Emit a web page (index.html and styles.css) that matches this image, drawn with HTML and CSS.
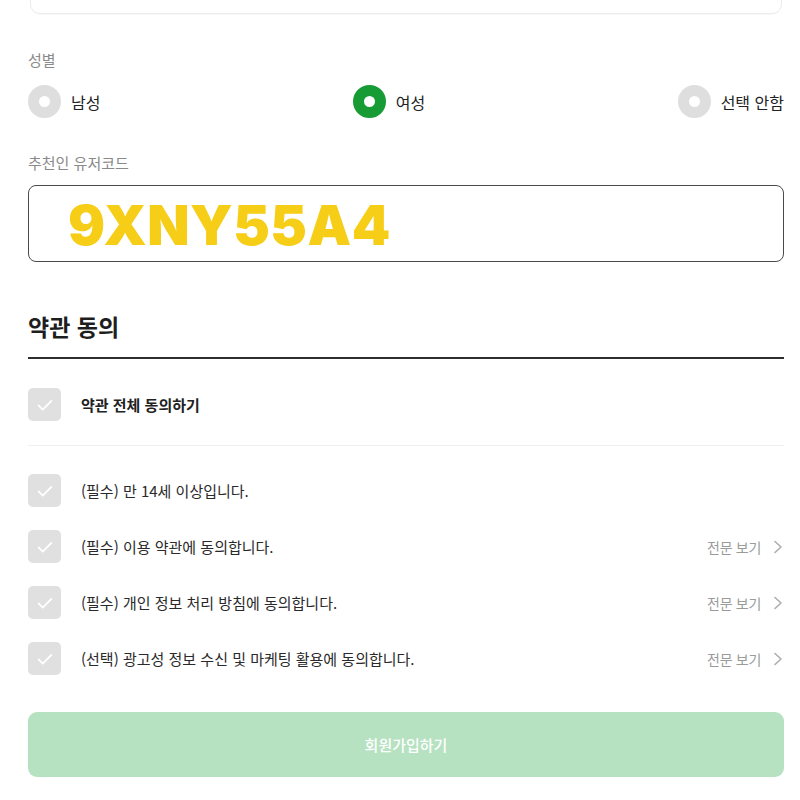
FILE: index.html
```html
<!DOCTYPE html>
<html lang="ko">
<head>
<meta charset="utf-8">
<link rel="stylesheet" href="styles.css">
</head>
<body>
<div class="page">
  <div class="prev-box"></div>

  <div class="label first">성별</div>
  <div class="radios">
    <label class="radio"><span class="dot"></span><span>남성</span></label>
    <label class="radio"><span class="dot on"></span><span>여성</span></label>
    <label class="radio"><span class="dot"></span><span>선택 안함</span></label>
  </div>

  <div class="label second">추천인 유저코드</div>
  <div class="code-input">9XNY55A4</div>

  <h2 class="terms-title">약관 동의</h2>

  <div class="all-row">
    <span class="check"><svg viewBox="0 0 24 24" width="22" height="22"><path d="M5 12.5l4.5 4.5L19 7.5" fill="none" stroke="#fff" stroke-width="2" stroke-linecap="round" stroke-linejoin="round"/></svg></span>
    <span class="all-text">약관 전체 동의하기</span>
  </div>

  <div class="terms">
    <div class="term">
      <span class="check"><svg viewBox="0 0 24 24" width="22" height="22"><path d="M5 12.5l4.5 4.5L19 7.5" fill="none" stroke="#fff" stroke-width="2" stroke-linecap="round" stroke-linejoin="round"/></svg></span>
      <span class="term-text">(필수) 만 14세 이상입니다.</span>
    </div>
    <div class="term">
      <span class="check"><svg viewBox="0 0 24 24" width="22" height="22"><path d="M5 12.5l4.5 4.5L19 7.5" fill="none" stroke="#fff" stroke-width="2" stroke-linecap="round" stroke-linejoin="round"/></svg></span>
      <span class="term-text">(필수) 이용 약관에 동의합니다.</span>
      <span class="view">전문 보기<svg viewBox="0 0 10 14" width="10" height="14"><path d="M2 1.5L8 7l-6 5.5" fill="none" stroke="#aaa" stroke-width="1.5" stroke-linecap="round" stroke-linejoin="round"/></svg></span>
    </div>
    <div class="term">
      <span class="check"><svg viewBox="0 0 24 24" width="22" height="22"><path d="M5 12.5l4.5 4.5L19 7.5" fill="none" stroke="#fff" stroke-width="2" stroke-linecap="round" stroke-linejoin="round"/></svg></span>
      <span class="term-text">(필수) 개인 정보 처리 방침에 동의합니다.</span>
      <span class="view">전문 보기<svg viewBox="0 0 10 14" width="10" height="14"><path d="M2 1.5L8 7l-6 5.5" fill="none" stroke="#aaa" stroke-width="1.5" stroke-linecap="round" stroke-linejoin="round"/></svg></span>
    </div>
    <div class="term">
      <span class="check"><svg viewBox="0 0 24 24" width="22" height="22"><path d="M5 12.5l4.5 4.5L19 7.5" fill="none" stroke="#fff" stroke-width="2" stroke-linecap="round" stroke-linejoin="round"/></svg></span>
      <span class="term-text">(선택) 광고성 정보 수신 및 마케팅 활용에 동의합니다.</span>
      <span class="view">전문 보기<svg viewBox="0 0 10 14" width="10" height="14"><path d="M2 1.5L8 7l-6 5.5" fill="none" stroke="#aaa" stroke-width="1.5" stroke-linecap="round" stroke-linejoin="round"/></svg></span>
    </div>
  </div>

  <button class="submit">회원가입하기</button>
</div>
</body>
</html>
```

FILE: styles.css
```css
* { box-sizing: border-box; }
html, body { margin: 0; padding: 0; background: #fff; }
body {
  font-family: "Noto Sans CJK KR", "Noto Sans", sans-serif;
  color: #222;
  overflow: hidden;
}
.page {
  width: 756px;
  margin-left: 28px;
  display: flex;
  flex-direction: column;
}
.prev-box {
  height: 60px;
  margin-top: -46px;
  margin-left: 2px;
  margin-right: 2px;
  border: 1px solid #ececec;
  border-radius: 10px;
  box-shadow: 0 1px 1px rgba(0,0,0,0.03);
}
.label {
  font-size: 15px;
  line-height: 20px;
  height: 20px;
  color: #8a8a8a;
}
.label.first { margin-top: 36px; }
.label.second { margin-top: 35px; }
.radios {
  margin-top: 15px;
  display: flex;
  justify-content: space-between;
  align-items: center;
  height: 33px;
}
.radio {
  display: flex;
  align-items: center;
  gap: 10px;
  font-size: 16px;
  color: #222;
}
.dot {
  width: 33px;
  height: 33px;
  border-radius: 50%;
  border: 11px solid #dedede;
  background: #fff;
}
.dot.on { border-color: #179b35; }
.code-input {
  margin-top: 12px;
  height: 77px;
  border: 1px solid #4a4a4a;
  border-radius: 8px;
  padding-left: 39px;
  padding-top: 4px;
  font-family: "Inter", "Liberation Sans", sans-serif;
  font-weight: 900;
  font-size: 55px;
  line-height: 71px;
  color: #f6cd17;
  letter-spacing: 0.5px;
}
.terms-title {
  margin: 49px 0 0;
  font-size: 23px;
  font-weight: 700;
  line-height: 30px;
  color: #1e1e1e;
  padding-bottom: 16px;
  border-bottom: 2px solid #2e2e2e;
}
.check {
  width: 33px;
  height: 33px;
  border-radius: 5px;
  background: #e0e0e0;
  display: flex;
  align-items: center;
  justify-content: center;
  flex-shrink: 0;
}
.all-row {
  margin-top: 29px;
  display: flex;
  align-items: center;
  gap: 20px;
  padding-bottom: 24px;
  border-bottom: 1px solid #efefef;
}
.all-text {
  font-size: 15px;
  font-weight: 700;
  color: #222;
}
.terms {
  margin-top: 28px;
  display: flex;
  flex-direction: column;
  gap: 23px;
}
.term {
  display: flex;
  align-items: center;
  gap: 20px;
  height: 33px;
}
.term-text {
  font-size: 15px;
  color: #2a2a2a;
  flex: 1;
}
.view {
  display: flex;
  align-items: center;
  gap: 12px;
  font-size: 14px;
  letter-spacing: -0.3px;
  color: #9b9b9b;
  margin-right: 1px;
}
.submit {
  margin-top: 37px;
  height: 65px;
  border: none;
  border-radius: 9px;
  background: #b6e2c1;
  color: #fff;
  font-family: "Noto Sans CJK KR", "Noto Sans", sans-serif;
  font-size: 15px;
  font-weight: 500;
}
```
